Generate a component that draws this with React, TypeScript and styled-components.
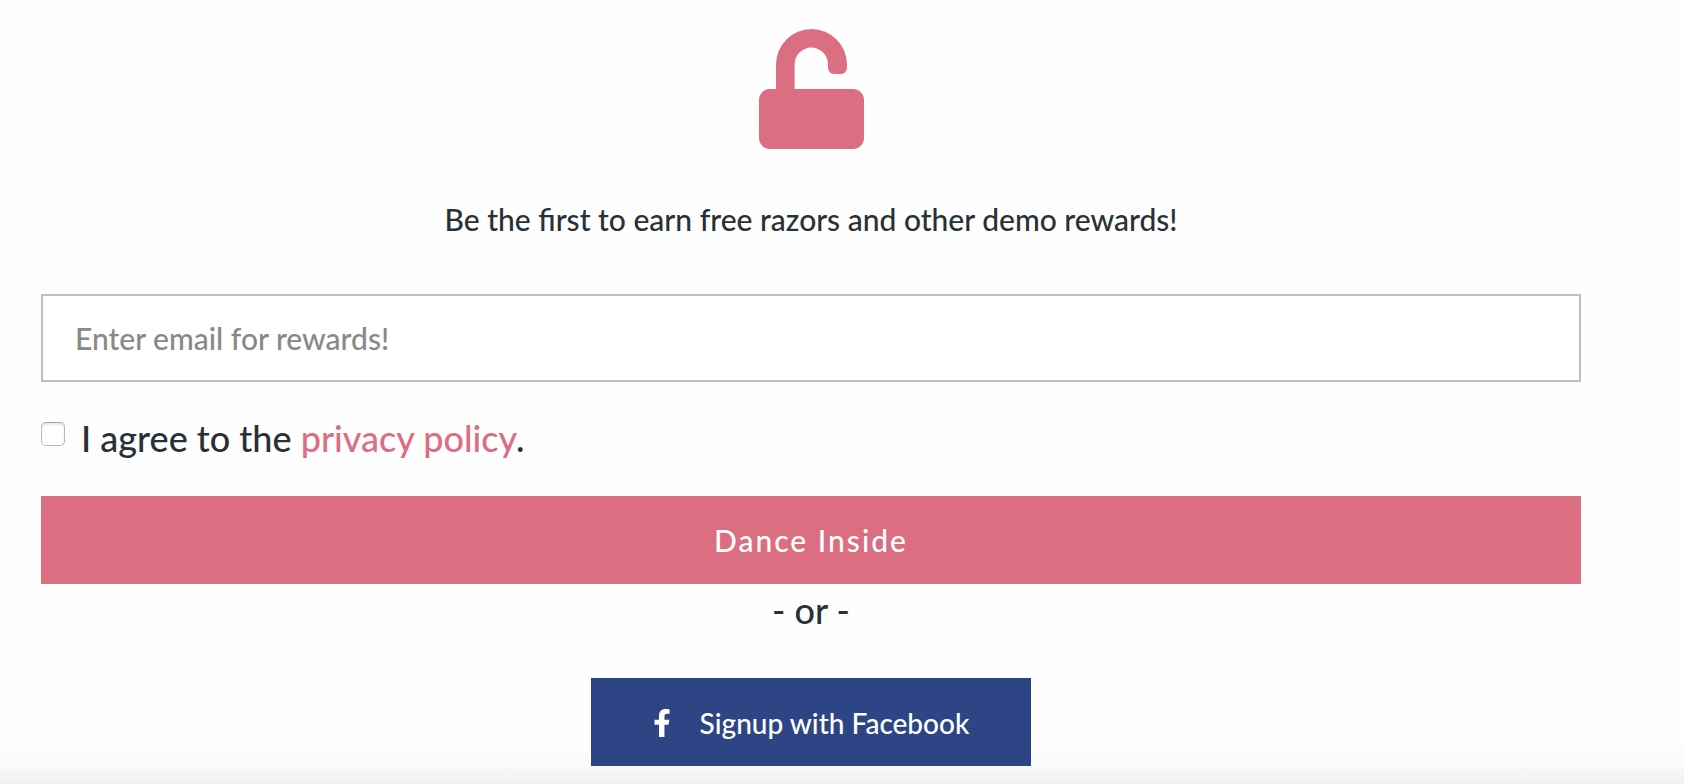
import React from "react";
import styled, { createGlobalStyle } from "styled-components";

const pink = "#db6e80";
const ink = "#293037";

const GlobalStyle = createGlobalStyle`
  *, *::before, *::after { box-sizing: border-box; }
  body {
    margin: 0;
    background: #ffffff;
    color: ${ink};
    font-family: Lato, "Liberation Sans", sans-serif;
    font-weight: 500;
    -webkit-font-smoothing: antialiased;
  }
`;

const Page = styled.main`
  display: flex;
  flex-direction: column;
  min-height: 100vh;
  padding: 29px 103px 18px 41px;
  background: linear-gradient(to top, #f1f1f1, #fafafa 20px, #fefefe 42px, #fefefe);
`;

const LockIcon = styled.svg`
  display: block;
  width: 105px;
  height: 120px;
  margin: 0 auto;
  fill: ${pink};
`;

const Headline = styled.h1`
  margin: 48px 0 0;
  font-size: 30px;
  line-height: 44px;
  font-weight: 500;
  text-align: center;
`;

const Form = styled.form`
  display: flex;
  flex-direction: column;
  margin-top: 53px;
`;

const EmailInput = styled.input`
  width: 100%;
  height: 88px;
  padding: 0 32px;
  border: 2px solid #c0c0c0;
  border-radius: 0;
  background: #ffffff;
  color: ${ink};
  font: inherit;
  font-size: 30px;
  &::placeholder { color: #888888; opacity: 1; }
`;

const Consent = styled.label`
  display: flex;
  align-items: flex-start;
  gap: 16px;
  margin-top: 30px;
  font-size: 36px;
  line-height: 52px;
`;

const Checkbox = styled.input`
  appearance: none;
  flex: none;
  width: 24px;
  height: 24px;
  margin: 10px 0 0;
  border: 1px solid #b8b8b8;
  border-top-color: #a6a6a6;
  border-radius: 5px;
  background: #ffffff;
  box-shadow: inset 0 2px 2px #e8e8e8;
`;

const PolicyLink = styled.a`
  color: ${pink};
  text-decoration: none;
`;

const SubmitButton = styled.button`
  height: 88px;
  margin-top: 32px;
  padding: 0;
  border: 0;
  background: ${pink};
  color: #ffffff;
  font: inherit;
  font-size: 30px;
  letter-spacing: 2px;
`;

const Divider = styled.p`
  margin: 0;
  font-size: 36px;
  line-height: 52px;
  text-align: center;
`;

const FacebookButton = styled.button`
  display: flex;
  align-items: center;
  align-self: center;
  gap: 30px;
  height: 88px;
  margin-top: 42px;
  padding: 2px 62px 0;
  border: 0;
  background: #2d4585;
  color: #ffffff;
  font: inherit;
  font-size: 28px;
`;

const FacebookIcon = styled.svg`
  width: 17px;
  height: 28px;
  fill: currentColor;
`;

export default function App() {
  return (
    <>
      <GlobalStyle />
      <Page>
        <LockIcon viewBox="0 0 105 120" aria-hidden="true">
          <path d="M17 60V35.500a35.500 35.500 0 0 1 71 0v3.500a6 6 0 0 1-6 6h-7a6 6 0 0 1-6-6v-3.500a16.700 16.900 0 0 0-33.400 0V60H94a11 11 0 0 1 11 11v38a11 11 0 0 1-11 11H11a11 11 0 0 1-11-11V71a11 11 0 0 1 11-11z" />
        </LockIcon>
        <Headline>Be the first to earn free razors and other demo rewards!</Headline>
        <Form onSubmit={(event) => event.preventDefault()}>
          <EmailInput type="email" aria-label="Email" placeholder="Enter email for rewards!" />
          <Consent>
            <Checkbox type="checkbox" />
            <span>
              I agree to the <PolicyLink href="#privacy">privacy policy</PolicyLink>.
            </span>
          </Consent>
          <SubmitButton type="submit">Dance Inside</SubmitButton>
        </Form>
        <Divider>- or -</Divider>
        <FacebookButton type="button">
          <FacebookIcon viewBox="22 0 256 512" aria-hidden="true">
            <path d="M279 288l14-93h-89v-60c0-25 12-50 52-50h41V7s-37-7-72-7c-73 0-121 44-121 125v70H23v93h81v224h100V288z" />
          </FacebookIcon>
          Signup with Facebook
        </FacebookButton>
      </Page>
    </>
  );
}
